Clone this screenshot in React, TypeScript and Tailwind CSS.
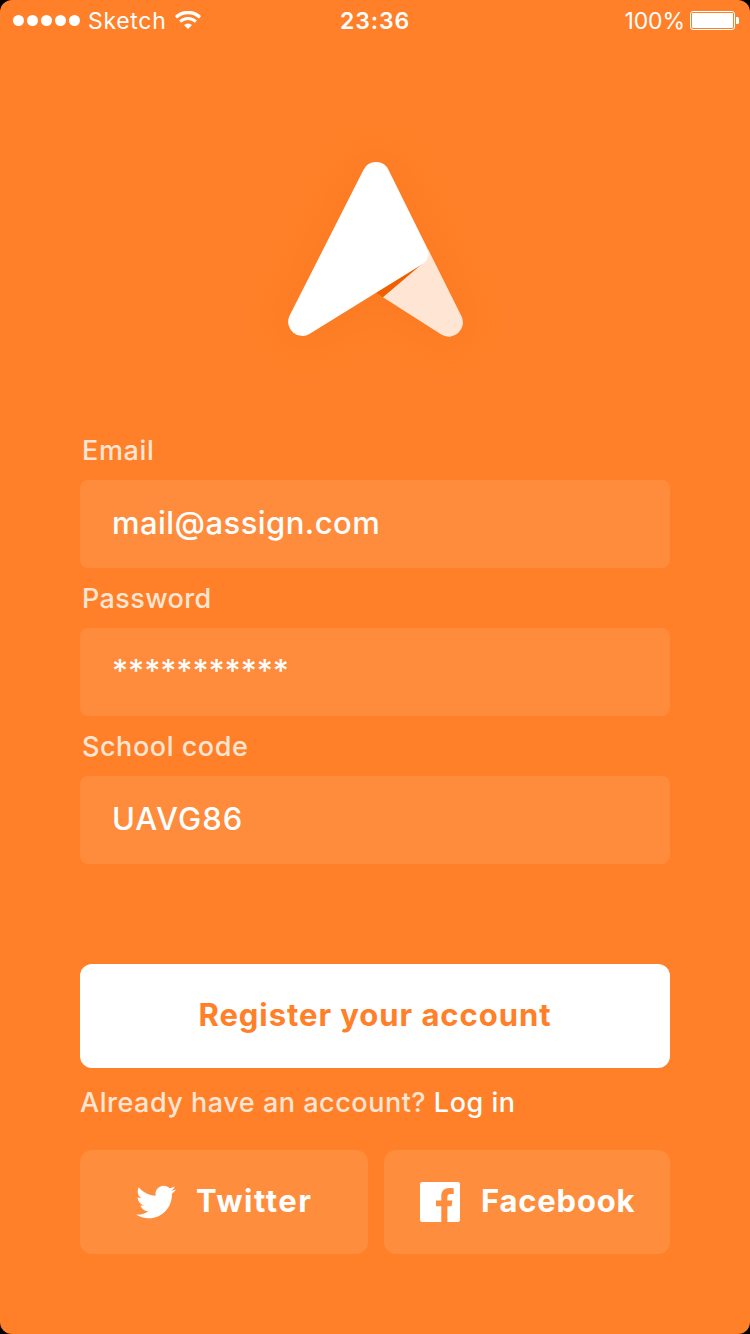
import { FaTwitter } from "react-icons/fa";

function StatusBar() {
  return (
    <header className="grid h-[41px] shrink-0 grid-cols-3 items-center text-[23px] leading-[39px]">
      <div className="flex items-center pl-[13px]">
        <div className="flex gap-[3px]">
          {[0, 1, 2, 3, 4].map((n) => (
            <span key={n} className="size-[11px] rounded-full bg-white" />
          ))}
        </div>
        <span className="ml-[8px] w-[87px] pt-[2px] font-normal tracking-[0.7px]">Sketch</span>
        <svg className="mb-[1px]" width="26" height="18" viewBox="0 0 26 18" fill="none" stroke="white" aria-hidden="true">
          <path d="M1 6.3a17.4 17.4 0 0 1 24 0" strokeWidth="3.3" />
          <path d="M5.1 10.6a11.4 11.4 0 0 1 15.8 0" strokeWidth="3" />
          <path d="M13 18 8.9 14a6 6 0 0 1 8.2 0Z" fill="white" stroke="none" />
        </svg>
      </div>
      <time className="pt-[2px] text-center font-semibold tracking-[0.9px]">23:36</time>
      <div className="flex items-center justify-end pr-[11px]">
        <span className="mr-[5px] pt-[2px] font-normal tracking-[-0.1px]">100%</span>
        <svg width="49" height="19" viewBox="0 0 49 19" aria-hidden="true">
          <rect x=".5" y=".5" width="44" height="18" rx="2.5" fill="none" stroke="white" />
          <rect x="2" y="2" width="41" height="15" rx="1" fill="white" />
          <path d="M46 6h1.5q1.5 0 1.5 1.5v4q0 1.5-1.5 1.5H46Z" fill="white" />
        </svg>
      </div>
    </header>
  );
}

function Logo() {
  return (
    <svg
      className="mx-auto mt-[69px] shrink-0"
      width="270"
      height="280"
      viewBox="240 110 270 280"
      aria-hidden="true"
    >
      <defs>
        <filter id="shade" x="-40%" y="-40%" width="180%" height="180%">
          <feGaussianBlur stdDeviation="20" />
        </filter>
      </defs>
      <path
        d="M363 171Q376 153 389 171L462 317Q467 337 440 334L379 295 309 334Q283 337 289 317Z"
        fill="#ed6000"
        stroke="#ed6000"
        strokeWidth="12"
        opacity=".17"
        filter="url(#shade)"
      />
      <path d="M376 292.5 383 297.3 424 263Z" fill="#ee6000" />
      <path d="M428 249 461.6 316.5A14.2 14.2 0 0 1 441.3 334.6L383 297.3 422 264Z" fill="#ffe5d4" />
      <path
        d="M363.4 170A14 14 0 0 1 388.7 170.2L427.3 248.3A12.5 12.5 0 0 1 421.8 264.4L309.8 333.7A14.1 14.1 0 0 1 289.4 316Z"
        fill="white"
      />
    </svg>
  );
}

type FieldProps = { label: string; value: string; valueClass: string; labelClass: string };

function Field({ label, value, valueClass, labelClass }: FieldProps) {
  return (
    <div className="h-[148px]">
      <div className={`h-[60px] pl-[2px] pt-[10px] text-[27px] font-medium leading-[41px] text-[#ffe5d4] ${labelClass}`}>
        {label}
      </div>
      <div className={`h-[88px] rounded-[8px] bg-[#ff8c3c] pl-[32px] text-[31px] font-medium leading-[86px] ${valueClass}`}>
        {value}
      </div>
    </div>
  );
}

function FacebookIcon() {
  return (
    <svg width="40" height="40" viewBox="0 0 40 40" fill="white" aria-hidden="true">
      <path d="M2.2 0H37.8A2.2 2.2 0 0 1 40 2.2V37.8A2.2 2.2 0 0 1 37.8 40H27.4V24.3H31.5L32.4 18.5H27.4V15.5C27.4 13.4 28.1 12 30.5 12H33.7V6.3C32.8 6.1 31 6 29.2 6 24.4 6 21.3 8.8 21.3 14V18.5H16V24.3H21.3V40H2.2A2.2 2.2 0 0 1 0 37.8V2.2A2.2 2.2 0 0 1 2.2 0Z" />
    </svg>
  );
}

export default function App() {
  return (
    <div className="bg-black">
      <main className="flex h-[1334px] w-[750px] flex-col overflow-hidden rounded-[12px] bg-[#ff8028] font-['Inter','Liberation_Sans',sans-serif] text-white">
        <StatusBar />
        <Logo />
        <section className="mt-[30px] px-[80px]">
          <Field label="Email" value="mail@assign.com" labelClass="tracking-[0.65px]" valueClass="tracking-[0.45px]" />
          <Field label="Password" value="***********" labelClass="tracking-[0.4px]" valueClass="tracking-[-0.05px]" />
          <Field label="School code" value="UAVG86" labelClass="tracking-[0.55px]" valueClass="tracking-[1px]" />
        </section>
        <section className="mt-[100px] px-[80px]">
          <button className="block h-[104px] w-full rounded-[12px] bg-white pb-[2px] text-center text-[31px] font-bold tracking-[0.95px] text-[#ff8028]">
            Register your account
          </button>
          <p className="h-[82px] pt-[14px] text-[27px] font-medium leading-[41px] tracking-[0.52px] text-[#ffe5d4]">
            Already have an account? <a className="text-white">Log in</a>
          </p>
          <div className="grid grid-cols-[288px_286px] gap-[16px]">
            <button className="flex h-[104px] items-center rounded-[12px] bg-[#ff8d3e] pl-[56px] text-[31px] font-bold tracking-[1.5px]">
              <FaTwitter className="size-[40px]" />
              <span className="mb-[2px] ml-[20px]">Twitter</span>
            </button>
            <button className="flex h-[104px] items-center rounded-[12px] bg-[#ff8d3e] pl-[36px] text-[31px] font-bold tracking-[0.8px]">
              <FacebookIcon />
              <span className="mb-[2px] ml-[21px]">Facebook</span>
            </button>
          </div>
        </section>
      </main>
    </div>
  );
}
